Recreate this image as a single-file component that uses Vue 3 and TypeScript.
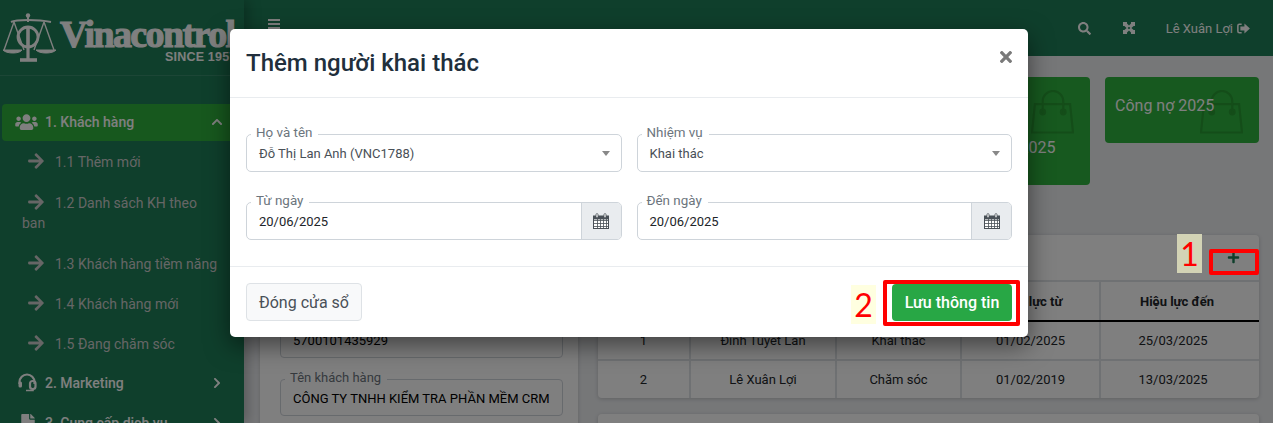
<script setup lang="ts">
interface SubItem { label: string }
const subItems: SubItem[] = [
  { label: '1.1 Thêm mới' },
  { label: '1.2 Danh sách KH theo ban' },
  { label: '1.3 Khách hàng tiềm năng' },
  { label: '1.4 Khách hàng mới' },
  { label: '1.5 Đang chăm sóc' },
]
const stats = ['Khách hàng 2025', 'Hợp đồng 2025', 'Doanh thu 2025', 'Hóa đơn 2025', 'Doanh thu\nkhách hàng\ntháng này 2025', 'Công nợ 2025']
const columns = ['STT', 'Họ và tên', 'Nhiệm vụ', 'Hiệu lực từ', 'Hiệu lực đến']
const rows = [
  ['1', 'Đinh Tuyết Lan', 'Khai thác', '01/02/2025', '25/03/2025'],
  ['2', 'Lê Xuân Lợi', 'Chăm sóc', '01/02/2019', '13/03/2025'],
]
const ARROW = 'M190.5 66.9l22.2-22.2c9.4-9.4 24.6-9.4 33.9 0L441 239c9.4 9.4 9.4 24.6 0 33.9L246.6 467.3c-9.4 9.4-24.6 9.4-33.9 0l-22.2-22.2c-9.5-9.5-9.3-25 .4-34.3L311.4 296H24c-13.3 0-24-10.7-24-24v-32c0-13.3 10.7-24 24-24h287.4L190.9 101.2c-9.8-9.3-10-24.8-.4-34.3z'
const CHEVRON = 'M285.476 272.971L91.132 467.314c-9.373 9.373-24.569 9.373-33.941 0l-22.667-22.667c-9.357-9.357-9.375-24.522-.04-33.901L188.505 256 34.484 101.255c-9.335-9.379-9.317-24.544.04-33.901l22.667-22.667c9.373-9.373 24.569-9.373 33.941 0L285.475 239.03c9.373 9.372 9.373 24.568.001 33.941z'
const gridX = [4, 7, 10, 13]
const gridY = [7, 10, 13]
</script>

<template>
  <div class="page">
    <div class="shell">
      <aside class="sidebar">
        <div class="logo">
          <svg class="scale" viewBox="0 0 54 50" fill="none" stroke="currentColor">
            <path d="M8 9 Q12 7 25 7 Q38 7 48 9" stroke-width="2" />
            <circle cx="25" cy="2.5" r="2.2" fill="currentColor" stroke="none" />
            <path d="M25 4 V9" stroke-width="2" />
            <circle cx="25" cy="24" r="10" stroke-width="2.8" />
            <path d="M25 15 V33" stroke-width="3.6" />
            <path d="M25 34 V46" stroke-width="3.2" />
            <path d="M17 47 H34" stroke-width="3.6" />
            <path d="M11 9 L1 37 M11 9 L21 37 M41 9 L31 37 M41 9 L51 37" stroke-width="1.4" />
            <path d="M0 37 H19 C17 41 3 41 0 37 Z M33 37 H53 C50 41 36 41 33 37 Z" fill="currentColor" stroke-width="1" />
          </svg>
          <div class="brand">
            <span class="brand-name">Vinacontrol</span>
            <span class="brand-since">SINCE 1957</span>
          </div>
        </div>
        <nav class="menu">
          <div class="item active">
            <svg class="item-ico" viewBox="0 0 640 512" fill="currentColor"><path d="M96 224c35.3 0 64-28.7 64-64s-28.7-64-64-64-64 28.7-64 64 28.7 64 64 64zm448 0c35.3 0 64-28.7 64-64s-28.7-64-64-64-64 28.7-64 64 28.7 64 64 64zm32 32h-64c-17.6 0-33.5 7.1-45.1 18.6 40.3 22.1 68.9 62 75.1 109.4h66c17.7 0 32-14.3 32-32v-32c0-35.3-28.7-64-64-64zm-256 0c61.9 0 112-50.1 112-112S381.9 32 320 32 208 82.1 208 144s50.1 112 112 112zm76.8 32h-8.3c-20.8 10-43.9 16-68.5 16s-47.6-6-68.5-16h-8.3C179.6 288 128 339.6 128 403.2V432c0 26.5 21.5 48 48 48h288c26.5 0 48-21.5 48-48v-28.8c0-63.6-51.6-115.2-115.2-115.2zm-223.7-13.4C161.5 263.1 145.6 256 128 256H64c-35.3 0-64 28.7-64 64v32c0 17.7 14.3 32 32 32h65.9c6.3-47.4 34.9-87.3 75.2-109.4z" /></svg>
            <span class="item-text">1. Khách hàng</span>
            <svg class="chev up" viewBox="0 0 320 512" fill="currentColor"><path :d="CHEVRON" /></svg>
          </div>
          <a v-for="s in subItems" :key="s.label" class="sub">
            <svg class="sub-ico" viewBox="0 0 448 512" fill="currentColor"><path :d="ARROW" /></svg>{{ s.label }}
          </a>
          <div class="item">
            <svg class="item-ico head" viewBox="0 0 20 20" fill="none" stroke="currentColor" stroke-width="2.2">
              <path d="M2.5 11 V9 a7.5 7.5 0 0 1 15 0 V11" />
              <rect x="1.5" y="8.5" width="3.5" height="6" rx="1.5" fill="currentColor" stroke="none" />
              <rect x="13" y="8" width="5.5" height="8" rx="2.5" />
              <path d="M16 16 V17.5 H9" stroke-width="1.6" />
            </svg>
            <span class="item-text">2. Marketing</span>
            <svg class="chev" viewBox="0 0 320 512" fill="currentColor"><path :d="CHEVRON" /></svg>
          </div>
          <div class="item">
            <svg class="item-ico doc" viewBox="0 0 384 512" fill="currentColor"><path d="M224 136V0H24C10.7 0 0 10.7 0 24v464c0 13.3 10.7 24 24 24h336c13.3 0 24-10.7 24-24V160H248c-13.2 0-24-10.8-24-24zm160-14.1v6.1H256V0h6.1c6.4 0 12.5 2.5 17 7l97.9 98c4.5 4.5 7 10.6 7 16.9z" /></svg>
            <span class="item-text">3. Cung cấp dịch vụ</span>
            <svg class="chev" viewBox="0 0 320 512" fill="currentColor"><path :d="CHEVRON" /></svg>
          </div>
        </nav>
      </aside>

      <main class="main">
        <header class="topbar">
          <span class="burger"><i /><i /><i /></span>
          <div class="top-right">
            <svg class="top-ico" viewBox="0 0 512 512" fill="currentColor"><path d="M505 442.7L405.3 343c-4.5-4.5-10.6-7-17-7H372c27.6-35.3 44-79.7 44-128C416 93.1 322.9 0 208 0S0 93.1 0 208s93.1 208 208 208c48.3 0 92.7-16.4 128-44v16.3c0 6.4 2.5 12.5 7 17l99.7 99.7c9.4 9.4 24.6 9.4 33.9 0l28.3-28.3c9.4-9.4 9.4-24.6.1-34zM208 336c-70.7 0-128-57.2-128-128 0-70.7 57.2-128 128-128 70.7 0 128 57.2 128 128 0 70.7-57.2 128-128 128z" /></svg>
            <svg class="top-ico expand" viewBox="0 0 12 12" fill="currentColor">
              <path d="M0 0 H4 V1.4 L6 3.6 L8 1.4 V0 H12 V4 H10.6 L8.4 6 L10.6 8 H12 V12 H8 V10.6 L6 8.4 L4 10.6 V12 H0 V8 H1.4 L3.6 6 L1.4 4 H0 Z M4.6 6 L6 7.3 L7.4 6 L6 4.7 Z" fill-rule="evenodd" />
            </svg>
            <span class="user">Lê Xuân Lợi
              <svg class="out" viewBox="0 0 14 12" fill="currentColor">
                <path d="M5 0.5 H2.5 A2.5 2.5 0 0 0 0 3 V9 A2.5 2.5 0 0 0 2.5 11.5 H5 V9.8 H2.6 A.9 .9 0 0 1 1.7 8.9 V3.1 A.9 .9 0 0 1 2.6 2.2 H5 Z" />
                <path d="M8 0.6 L14 6 L8 11.4 V8.2 H3.6 V3.8 H8 Z" />
              </svg>
            </span>
          </div>
        </header>

        <div class="content">
          <section class="stats">
            <div v-for="s in stats" :key="s" class="stat">
              <span class="stat-text">{{ s }}</span>
              <svg class="bag" viewBox="0 0 44 44" fill="none" stroke="currentColor" stroke-width="2.2">
                <path d="M4 14 H40 L43 43 H1 Z" />
                <path d="M12 20 V11 a10.5 10.5 0 0 1 21 0 V20" />
                <circle cx="12" cy="22" r="2.4" fill="currentColor" />
                <circle cx="33" cy="22" r="2.4" fill="currentColor" />
              </svg>
            </div>
          </section>

          <section class="columns">
            <div class="panel left-panel">
              <div class="lfield"><span class="lfield-label">Mã số thuế</span>5700101435929</div>
              <div class="lfield"><span class="lfield-label">Tên khách hàng</span>CÔNG TY TNHH KIỂM TRA PHẦN MỀM CRM</div>
            </div>
            <div class="right-col">
              <div class="panel">
                <div class="panel-head">
                  <svg class="plus" viewBox="0 0 448 512" fill="currentColor"><path d="M416 208H272V64c0-17.67-14.33-32-32-32h-32c-17.67 0-32 14.33-32 32v144H32c-17.67 0-32 14.33-32 32v32c0 17.67 14.33 32 32 32h144v144c0 17.67 14.33 32 32 32h32c17.67 0 32-14.33 32-32V304h144c17.67 0 32-14.33 32-32v-32c0-17.67-14.33-32-32-32z" /></svg>
                </div>
                <table class="tbl">
                  <colgroup>
                    <col class="c1" /><col class="c2" /><col class="c3" /><col class="c4" /><col class="c5" />
                  </colgroup>
                  <thead>
                    <tr><th v-for="c in columns" :key="c">{{ c }}</th></tr>
                  </thead>
                  <tbody>
                    <tr v-for="r in rows" :key="r[0]"><td v-for="(v, i) in r" :key="i">{{ v }}</td></tr>
                  </tbody>
                </table>
              </div>
              <div class="panel next-panel"></div>
            </div>
          </section>
        </div>
      </main>
    </div>

    <div class="backdrop"></div>

    <div class="modal-wrap">
      <div class="modal">
        <div class="modal-head">
          <h2 class="modal-title">Thêm người khai thác</h2>
          <svg class="close" viewBox="0 0 352 512" fill="currentColor"><path d="M242.72 256l100.07-100.07c12.28-12.28 12.28-32.19 0-44.48l-22.24-22.24c-12.28-12.28-32.19-12.28-44.48 0L176 189.28 75.93 89.21c-12.28-12.28-32.19-12.28-44.48 0L9.21 111.45c-12.28 12.28-12.28 32.19 0 44.48L109.28 256 9.21 356.07c-12.28 12.28-12.28 32.19 0 44.48l22.24 22.24c12.28 12.28 32.2 12.28 44.48 0L176 322.72l100.07 100.07c12.28 12.28 32.2 12.28 44.48 0l22.24-22.24c12.28-12.28 12.28-32.19 0-44.48L242.72 256z" /></svg>
        </div>
        <div class="modal-body">
          <div class="field">
            <span class="field-label">Họ và tên</span>
            <span class="field-value select-value">Đỗ Thị Lan Anh (VNC1788)</span>
            <span class="caret"></span>
          </div>
          <div class="field">
            <span class="field-label">Nhiệm vụ</span>
            <span class="field-value select-value">Khai thác</span>
            <span class="caret"></span>
          </div>
          <div v-for="label in ['Từ ngày', 'Đến ngày']" :key="label" class="field">
            <span class="field-label">{{ label }}</span>
            <span class="field-value">20/06/2025</span>
            <span class="addon">
              <svg class="cal" viewBox="0 0 16 16">
                <rect x="0.5" y="3" width="15" height="12.5" fill="#fff" stroke="#495057" />
                <rect x="0.5" y="3" width="15" height="3.4" fill="#495057" />
                <path v-for="x in gridX" :key="x" :d="`M${x}.5 6 V15`" stroke="#495057" stroke-width="0.8" />
                <path v-for="y in gridY" :key="y" :d="`M1 ${y}.5 H15`" stroke="#495057" stroke-width="0.8" />
                <rect x="3" y="0.6" width="2" height="4.2" rx="1" fill="#fff" stroke="#495057" stroke-width="0.8" />
                <rect x="11" y="0.6" width="2" height="4.2" rx="1" fill="#fff" stroke="#495057" stroke-width="0.8" />
              </svg>
            </span>
          </div>
        </div>
        <div class="modal-foot">
          <button class="btn btn-light" type="button">Đóng cửa sổ</button>
          <button class="btn btn-save" type="button">Lưu thông tin</button>
        </div>
      </div>
    </div>

    <span class="mark mark-1">1</span>
    <span class="redbox redbox-1"></span>
    <span class="mark mark-2">2</span>
    <span class="redbox redbox-2"></span>
  </div>
</template>

<style scoped>
.page {
  position: relative;
  height: 423px;
  overflow: hidden;
  font-family: Roboto, "Liberation Sans", sans-serif;
  font-size: 14px;
  color: #212529;
  background: #eceef1;
}
.shell { display: flex; height: 423px; }

/* sidebar */
.sidebar {
  width: 244px;
  flex: none;
  background: #1e7e58;
  color: #fff;
  box-shadow: 4px 0 12px rgba(0, 0, 0, .25);
  position: relative;
  z-index: 1;
}
.logo {
  height: 75px;
  border-bottom: 1px solid rgba(255, 255, 255, .12);
  box-sizing: content-box;
  display: flex;
  gap: 3px;
  padding-left: 3px;
  align-items: flex-start;
  overflow: hidden;
}
.scale { width: 54px; height: 50px; margin-top: 13px; flex: none; color: #fff; }
.brand { display: flex; flex-direction: column; margin-top: 15px; flex: none; }
.brand-name {
  font-family: "Liberation Serif", serif;
  font-weight: 700;
  font-size: 38px;
  line-height: 38px;
  letter-spacing: -1.6px;
  -webkit-text-stroke: 1.1px #fff;
  white-space: nowrap;
}
.brand-since {
  font-family: "Liberation Sans", sans-serif;
  font-weight: 700;
  font-size: 12.5px;
  line-height: 12px;
  letter-spacing: .2px;
  margin-top: -2px;
  margin-left: 105px;
  white-space: nowrap;
}

.menu { margin-top: 28px; padding-left: 2px; font-size: 14px; }
.item {
  height: 37px;
  display: flex;
  align-items: center;
  padding: 0 23px 0 13px;
  font-weight: 500;
  margin-bottom: 3px;
  border-radius: 4px;
}
.item.active { background: #2eb03c; margin-bottom: 0; padding-bottom: 1px; box-sizing: border-box; }
.item-ico { width: 23px; height: 18px; flex: none; margin-right: 7px; }
.item-ico.head { width: 20px; height: 20px; margin-left: 2px; margin-right: 8px; }
.item-ico.doc { width: 16px; height: 18px; margin-left: 5px; margin-right: 9px; }
.item-text { flex: 1; white-space: nowrap; }
.chev { width: 8px; height: 12px; flex: none; }
.chev.up { transform: rotate(-90deg); }

.sub {
  display: block;
  padding: 10px 24px 10px 20px;
  line-height: 20px;
  color: #ccc;
}
.sub:nth-of-type(-n+3) { margin-top: 1px; }
.sub-ico { width: 16px; height: 18px; margin: 0 11px 0 6px; vertical-align: -3px; }

/* main */
.main { flex: 1; min-width: 0; display: flex; flex-direction: column; }
.topbar {
  height: 56px;
  flex: none;
  background: #1e7e58;
  color: #fff;
  display: flex;
  align-items: center;
  justify-content: space-between;
  padding: 0 23px 0 24px;
}
.burger { display: flex; flex-direction: column; gap: 2px; width: 12px; margin-bottom: 8px; }
.burger i { display: block; height: 2px; background: #fff; }
.top-right { display: flex; align-items: center; }
.top-ico { width: 13px; height: 13px; }
.top-ico.expand { margin-left: 32px; width: 12px; height: 12px; }
.user { margin-left: 31px; font-size: 13px; display: flex; align-items: center; gap: 4px; white-space: nowrap; }
.out { width: 13px; height: 11px; }

.content { padding: 21px 14px 0 16px; }
.stats {
  display: grid;
  grid-template-columns: repeat(6, 154px);
  column-gap: 15px;
  align-items: start;
}
.stat {
  position: relative;
  background: #2eb23e;
  border-radius: 4px;
  padding: 18px 10px 27px;
  font-size: 16px;
  line-height: 21px;
  color: #fff;
  overflow: hidden;
  white-space: pre-line;
}
.stat-text { position: relative; z-index: 1; }
.bag {
  position: absolute;
  right: 16px;
  top: 13px;
  width: 43px;
  height: 44px;
  color: #289a32;
}

.columns { display: flex; gap: 20px; margin-top: 50px; align-items: flex-start; }
.panel {
  background: #fff;
  border-radius: 4px;
  box-shadow: 0 1px 4px rgba(0, 0, 0, .18);
}
.left-panel {
  width: 318px;
  flex: none;
  padding: 86px 15px 20px 20px;
  box-sizing: border-box;
}
.lfield {
  position: relative;
  height: 37px;
  border: 1px solid #ced4da;
  border-radius: 4px;
  box-sizing: border-box;
  padding: 0 12px;
  line-height: 37px;
  font-size: 13px;
  white-space: nowrap;
  margin-bottom: 21px;
  color: #000;
}
.lfield-label {
  position: absolute;
  left: 4px;
  top: -11px;
  line-height: 18px;
  font-size: 13px;
  padding: 0 6px 0 5px;
  background: #fff;
  color: #6c757d;
}
.right-col { width: 661px; flex: none; }
.panel-head {
  height: 45px;
  box-sizing: border-box;
  display: flex;
  justify-content: flex-end;
  padding: 16px 19px 0 0;
}
.plus { width: 13px; height: 13px; color: #1e7e58; }
.tbl { width: 661px; border-collapse: collapse; table-layout: fixed; text-align: center; font-size: 13px; }
.c1 { width: 92px; }
.c2 { width: 146px; }
.c3 { width: 125px; }
.c4 { width: 139px; }
.c5 { width: 159px; }
.tbl th, .tbl td { border: 2px solid #dee2e6; padding: 0; }
.tbl th { height: 38px; font-weight: 700; font-size: 13px; border-bottom: 2px solid #000; }
.tbl td { height: 37px; }
.tbl th:last-child { padding-right: 6px; }
.tbl td:last-child { padding-right: 14px; }
.tbl tr > :first-child { border-left: 0; }
.tbl tr > :last-child { border-right: 0; }
.tbl tbody tr:last-child td { border-bottom: 0; }
.next-panel { height: 60px; margin-top: 16px; }

/* overlay */
.backdrop { position: absolute; inset: 0; background: rgba(0, 0, 0, .5); z-index: 2; }
.modal-wrap {
  position: absolute;
  inset: 0;
  z-index: 3;
  display: flex;
  justify-content: center;
  align-items: flex-start;
  padding: 29px 15px 0 0;
}
.modal {
  width: 798px;
  background: #fff;
  border-radius: 5px;
  box-shadow: 0 8px 24px rgba(0, 0, 0, .5);
}
.modal-head {
  height: 69px;
  box-sizing: border-box;
  border-bottom: 1px solid #e9ecef;
  display: flex;
  align-items: center;
  justify-content: space-between;
  padding: 0 16px;
}
.modal-title { margin: 0; font-size: 24px; font-weight: 500; line-height: 30px; color: #212f3c; }
.close { width: 12px; height: 18px; color: #7a7a7a; margin-bottom: 12px; }
.modal-body {
  display: grid;
  grid-template-columns: 375.5px 375.5px;
  column-gap: 15px;
  row-gap: 30px;
  padding: 36px 16px 26px;
}
.field {
  position: relative;
  height: 38px;
  box-sizing: border-box;
  border: 1px solid #ced4da;
  border-radius: 5px;
  display: flex;
  align-items: center;
  font-size: 13px;
}
.field-label {
  position: absolute;
  left: 4px;
  top: -11px;
  background: #fff;
  padding: 0 6px 0 5px;
  font-size: 13.4px;
  line-height: 18px;
  color: #6c757d;
}
.field-value { flex: 1; padding-left: 12px; color: #212529; }
.select-value { color: #495057; }
.caret {
  width: 0;
  height: 0;
  margin-right: 11px;
  border-left: 4.5px solid transparent;
  border-right: 4.5px solid transparent;
  border-top: 5px solid #888;
}
.addon {
  width: 39px;
  align-self: stretch;
  background: #e9ecef;
  border-left: 1px solid #ced4da;
  border-radius: 0 4px 4px 0;
  display: flex;
  align-items: center;
  justify-content: center;
}
.cal { width: 16px; height: 16px; }
.modal-foot {
  border-top: 1px solid #e9ecef;
  padding: 16px;
  display: flex;
  justify-content: space-between;
  align-items: center;
}
.btn {
  height: 38px;
  box-sizing: border-box;
  border-radius: 4px;
  font-family: inherit;
  cursor: pointer;
}
.btn-light {
  width: 116px;
  background: #f8f9fa;
  border: 1px solid #dee2e6;
  font-size: 16px;
  color: #495057;
  padding: 0;
}
.btn-save {
  width: 120px;
  height: 37px;
  background: #28a745;
  border: 0;
  color: #fff;
  font-size: 16px;
  font-weight: 500;
  padding: 0;
}

/* annotations */
.mark {
  position: absolute;
  z-index: 4;
  font-family: Lato, "Liberation Sans", sans-serif;
  font-size: 32px;
  line-height: 39px;
  text-align: center;
  color: #f00;
  width: 25px;
  height: 39px;
}
.mark-1 { left: 1177px; top: 234px; background: #d3d3b5; }
.mark-2 { left: 851px; top: 285px; background: #ffffe0; }
.redbox {
  position: absolute;
  z-index: 4;
  box-sizing: border-box;
  border: 4px solid #f00;
  border-radius: 2px;
}
.redbox-1 { left: 1209px; top: 249px; width: 50px; height: 26px; }
.redbox-2 { left: 883px; top: 280px; width: 137px; height: 46px; }
</style>
